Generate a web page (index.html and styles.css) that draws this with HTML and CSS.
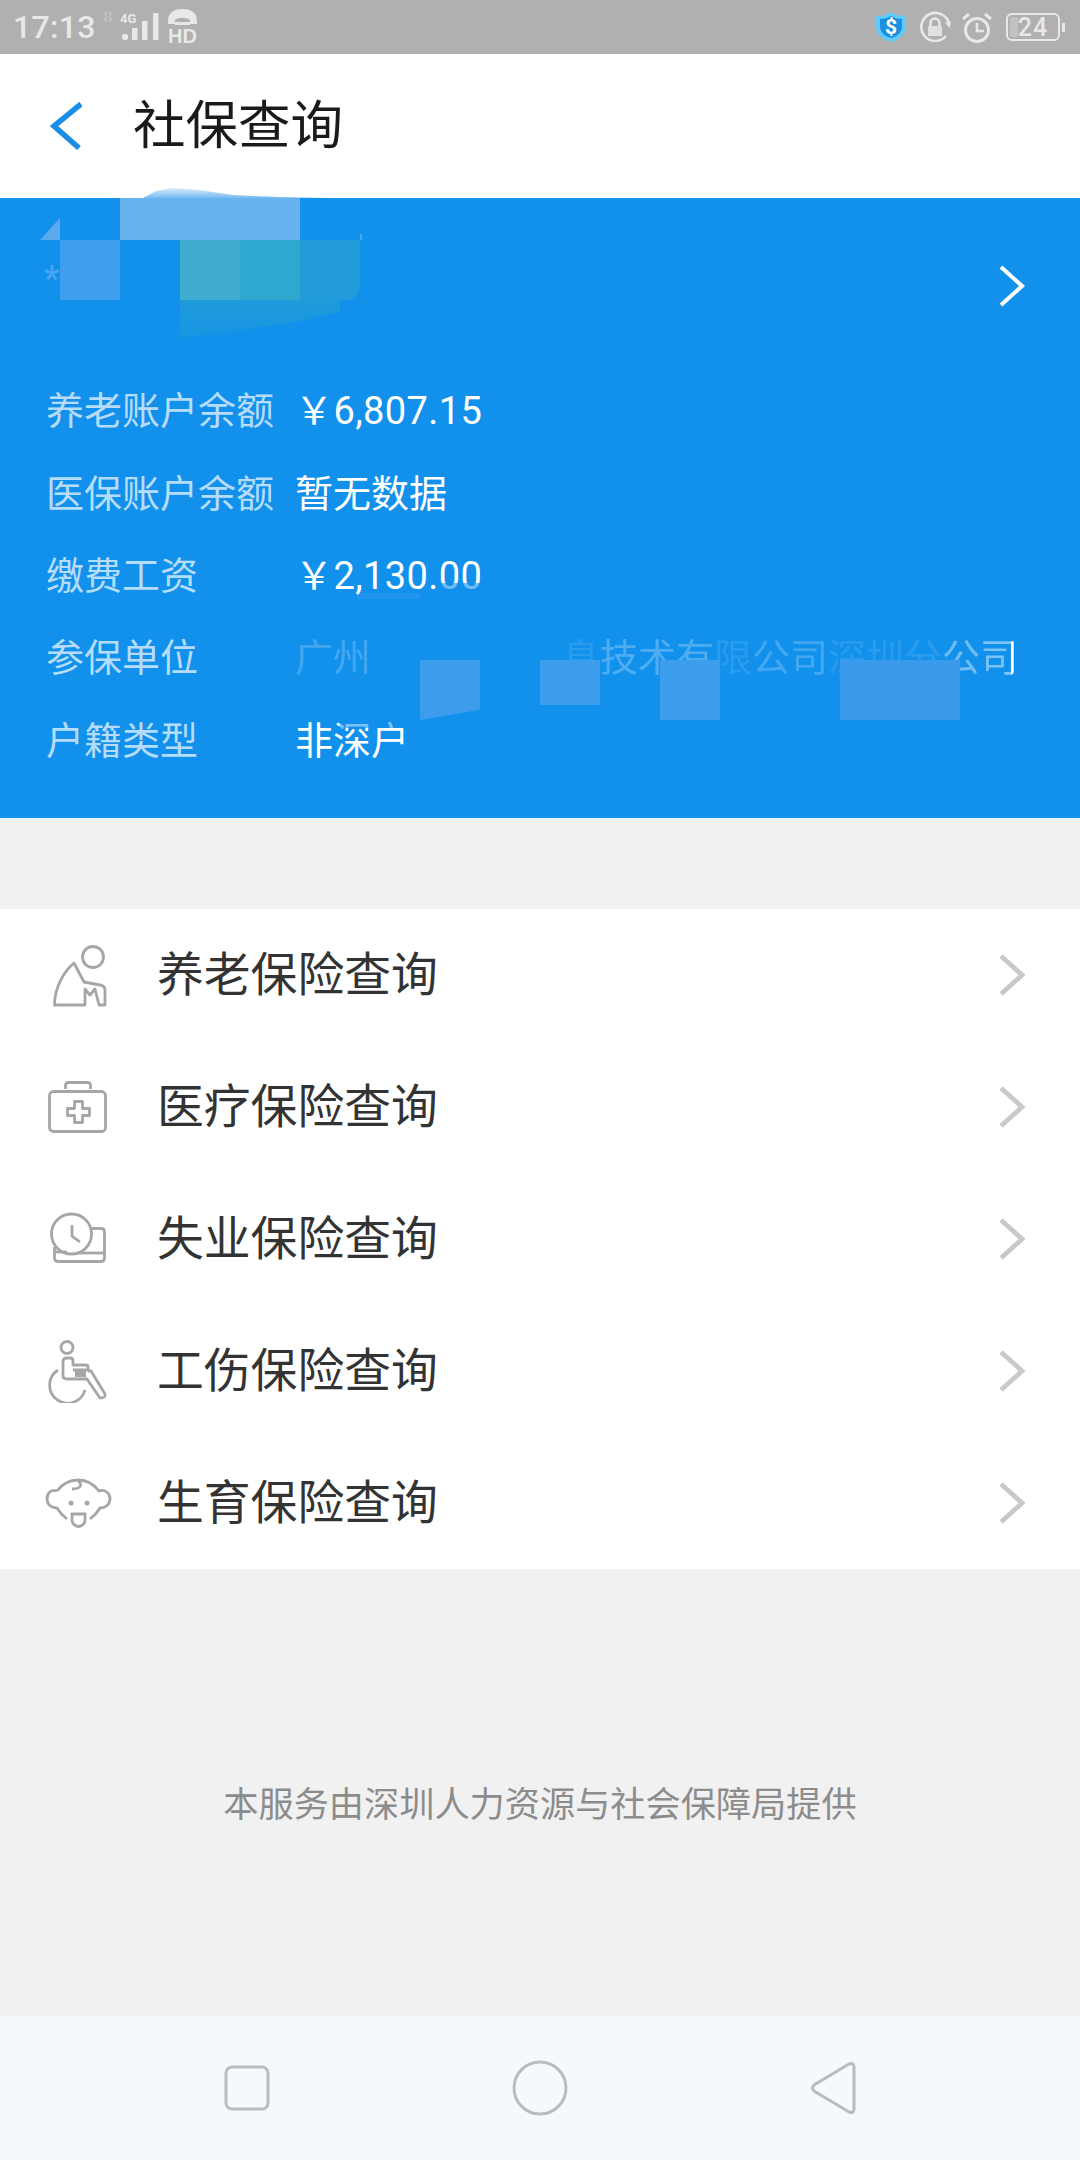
FILE: index.html
```html
<!DOCTYPE html>
<html lang="zh-CN">
<head>
<meta charset="utf-8">
<title>社保查询</title>
<link rel="stylesheet" href="styles.css">
</head>
<body>
<div class="phone">
  <div class="status">
    <div class="status-left">
      <span class="time">17:13</span>
      <svg class="sig" width="60" height="34" viewBox="0 0 60 34">
        <path d="M3 1v11M7 1v11M1 5l2-3M9 5L7 2M1 8l2 3M9 8l-2 3" stroke="#c6c6c6" stroke-width="1.200" fill="none"/>
        <text x="17" y="13" class="st-small">4G</text>
        <rect x="19" y="24" width="6" height="6" rx="2" fill="#e8e8e8"/>
        <rect x="29" y="18" width="5.500" height="12" fill="#e8e8e8"/>
        <rect x="39" y="11" width="5.500" height="19" fill="#e8e8e8"/>
        <rect x="50" y="3" width="5.500" height="27" fill="#e8e8e8"/>
      </svg>
      <svg class="hd" width="34" height="38" viewBox="0 0 34 38">
        <path d="M2 13C2 4 9 1 16.500 1S31 4 31 13v3h-7v-4c-4-3-11-3-15 0v4H2z" fill="#e8e8e8"/>
        <rect x="9" y="14" width="15" height="3" fill="#e8e8e8"/>
        <text x="2" y="35" class="st-hd">HD</text>
      </svg>
    </div>
    <div class="status-right">
      <svg class="s-shield" width="30" height="30" viewBox="0 0 30 30">
        <path d="M15 0c4 3 9 4 15 4v10c0 8-6 13-15 16C6 27 0 22 0 14V4c6 0 11-1 15-4z" fill="#5fcbfc"/>
        <path d="M15 4c3 2 7 3 11 3v7c0 6-4 10-11 12C8 24 4 20 4 14V7c4 0 8-1 11-3z" fill="#1e8edf"/>
        <text x="15" y="22" class="st-dollar">$</text>
      </svg>
      <svg class="s-lock" width="32" height="32" viewBox="0 0 32 32">
        <path d="M27 25A14 14 0 1 1 30 13" fill="none" stroke="#e8e8e8" stroke-width="2.600"/>
        <path d="M26 12l5 5 1-7z" fill="#e8e8e8"/>
        <rect x="9" y="15" width="14" height="10" fill="#e0e0e0"/>
        <path d="M11.500 15v-3a4.500 4.500 0 0 1 9 0v3" fill="none" stroke="#e8e8e8" stroke-width="2.500"/>
      </svg>
      <svg class="s-alarm" width="30" height="31" viewBox="0 0 30 31">
        <circle cx="15" cy="18" r="11.500" fill="none" stroke="#e8e8e8" stroke-width="3"/>
        <path d="M15 11v8h7" fill="none" stroke="#e8e8e8" stroke-width="2.600"/>
        <path d="M1 7l6-5M29 7l-6-5" fill="none" stroke="#e8e8e8" stroke-width="3"/>
      </svg>
      <div class="battery"><span class="batt-fill"></span><span class="batt-num">24</span><span class="batt-tip"></span></div>
    </div>
  </div>

  <header class="topbar">
    <svg class="back" width="34" height="48" viewBox="0 0 34 48"><path d="M33 2 6 24l25 22" fill="none" stroke="#1a8de6" stroke-width="5.500"/></svg>
    <h1 class="title">社保查询</h1>
  </header>

  <section class="card">
    <div class="mosaic m1"></div>
    <div class="mosaic m2"></div>
    <div class="mosaic m3"></div>
    <div class="mosaic m4"></div>
    <div class="mosaic m5"></div>
    <div class="mosaic m6"></div>
    <div class="mosaic m7"></div>
    <div class="mosaic m8"></div>
    <div class="mosaic m9"></div>
    <div class="mosaic veil"></div>
    <div class="mosaic b1"></div>
    <div class="mosaic b2"></div>
    <div class="mosaic b3"></div>
    <div class="mosaic b4"></div>
    <div class="mosaic b5"></div>
    <div class="mosaic b6"></div>
    <div class="mosaic b7"></div>

    <div class="card-head">
      <span class="star">*</span>
      <svg class="card-arrow" width="28" height="44" viewBox="0 0 28 44"><path d="M3 3l21 19L3 41" fill="none" stroke="#fff" stroke-width="4"/></svg>
    </div>
    <div class="info-list">
      <div class="info"><span class="k">养老账户余额</span><span class="v amount">￥6,807.15</span></div>
      <div class="info"><span class="k">医保账户余额</span><span class="v">暂无数据</span></div>
      <div class="info"><span class="k">缴费工资</span><span class="v amount">￥2,130.00</span></div>
      <div class="info"><span class="k">参保单位</span><span class="v"><span class="f25">广州</span><span class="gap"></span><span class="f15">息</span><span class="f30">技术有</span><span class="f15">限</span><span class="f25">公司</span><span class="f15">深圳分</span><span class="f45">公</span><span class="f-last">司</span></span></div>
      <div class="info"><span class="k">户籍类型</span><span class="v">非深户</span></div>
    </div>
  </section>

  <ul class="menu">
    <li class="row">
      <svg class="ico" width="62" height="64" viewBox="0 0 62 64">
        <g fill="none" stroke="#a6a6a6" stroke-width="2.800" stroke-linejoin="round">
          <circle cx="46" cy="14" r="10.500"/>
          <path d="M7.500 62C7.500 45 17 28 27 20L37 39 53 42Q58 43 58 47V62H52L48 46 43 52 38 46V62Z"/>
        </g>
      </svg>
      <span class="label">养老保险查询</span>
      <svg class="chev" width="28" height="44" viewBox="0 0 28 44"><path d="M3 3l21 19L3 41" fill="none" stroke="#c8c8c8" stroke-width="4.800"/></svg>
    </li>
    <li class="row">
      <svg class="ico" width="62" height="54" viewBox="0 0 62 54">
        <g fill="none" stroke="#a6a6a6" stroke-width="2.800">
          <rect x="2.500" y="11.500" width="56" height="40" rx="4"/>
          <path d="M18.500 9V5.500q0-3 3-3h19q3 0 3 3V9"/>
          <path d="M27.500 21.500h8v7h7v7h-7v7h-8v-7h-7v-7h7z" stroke-linejoin="round"/>
        </g>
      </svg>
      <span class="label">医疗保险查询</span>
      <svg class="chev" width="28" height="44" viewBox="0 0 28 44"><path d="M3 3l21 19L3 41" fill="none" stroke="#c8c8c8" stroke-width="4.800"/></svg>
    </li>
    <li class="row">
      <svg class="ico" width="62" height="54" viewBox="0 0 62 54">
        <g fill="none" stroke="#a6a6a6" stroke-width="2.800">
          <path d="M45 16.500H54q3.500 0 3.500 3.500v26q0 3.500-3.500 3.500H11q-3.500 0-3.500-3.500V35"/>
          <path d="M30 41H57"/>
          <path d="M8 40H20" />
          <circle cx="24.500" cy="22" r="20"/>
          <path d="M25 13v11l8 6"/>
        </g>
      </svg>
      <span class="label">失业保险查询</span>
      <svg class="chev" width="28" height="44" viewBox="0 0 28 44"><path d="M3 3l21 19L3 41" fill="none" stroke="#c8c8c8" stroke-width="4.800"/></svg>
    </li>
    <li class="row">
      <svg class="ico" width="62" height="64" viewBox="0 -1 62 64">
        <g fill="none" stroke="#a6a6a6" stroke-width="2.800" stroke-linejoin="round">
          <circle cx="20" cy="7.500" r="6"/>
          <path d="M16 36V22q0-4 4-4h3q3 0 3 3v4h13q2 0 2 2v3H26"/>
          <path d="M41 31h3L58 54q1 4-5 4L40 39H20q-4 0-4-3"/>
          <path d="M11 30A18 18 0 1 0 38 50"/>
        </g>
        <rect x="28" y="30" width="11" height="7" fill="#a6a6a6"/>
      </svg>
      <span class="label">工伤保险查询</span>
      <svg class="chev" width="28" height="44" viewBox="0 0 28 44"><path d="M3 3l21 19L3 41" fill="none" stroke="#c8c8c8" stroke-width="4.800"/></svg>
    </li>
    <li class="row">
      <svg class="ico wide" width="68" height="50" viewBox="0 0 68 50">
        <g fill="none" stroke="#a6a6a6" stroke-width="2.800">
          <path d="M12 13C18 5 25 2 33 2S48 5 54 13C60 11 65 15 65 21 65 27 60 30 55 30 52 35 49 38 45 41"/>
          <path d="M12 13C6 11 2 15 2 21 2 27 7 30 12 30 15 35 18 38 22 41"/>
          <path d="M33 3C38 6 36 11 27 11"/>
          <path d="M27 36h13v6a6.500 6.500 0 0 1-13 0z"/>
        </g>
        <circle cx="26" cy="25" r="2.500" fill="#a6a6a6"/>
        <circle cx="42" cy="25" r="2.500" fill="#a6a6a6"/>
      </svg>
      <span class="label">生育保险查询</span>
      <svg class="chev" width="28" height="44" viewBox="0 0 28 44"><path d="M3 3l21 19L3 41" fill="none" stroke="#c8c8c8" stroke-width="4.800"/></svg>
    </li>
  </ul>

  <main class="foot"><p>本服务由深圳人力资源与社会保障局提供</p></main>

  <nav class="navbar">
    <svg width="46" height="46" viewBox="0 0 46 46"><rect x="2" y="2" width="42" height="42" rx="6" fill="none" stroke="#b7bcc0" stroke-width="3"/></svg>
    <svg width="56" height="56" viewBox="0 0 56 56"><circle cx="28" cy="28" r="26" fill="none" stroke="#b7bcc0" stroke-width="3"/></svg>
    <svg width="46" height="54" viewBox="0 0 46 54"><path d="M39 3 4 24q-3 3 0 6l35 21q5 2 5-3V6q0-5-5-3z" fill="none" stroke="#b7bcc0" stroke-width="3"/></svg>
  </nav>
</div>
</body>
</html>
```
FILE: styles.css
```css
* { box-sizing: border-box; }
html, body { margin: 0; padding: 0; }
body { font-family: Roboto, "Noto Sans CJK SC", sans-serif; background: #f1f1f1; }
.phone { width: 1080px; height: 2160px; display: flex; flex-direction: column; overflow: hidden; }

.status { height: 54px; background: #b0b0b0; display: flex; justify-content: space-between; align-items: center; padding: 0 20px 0 13px; color: #e8e8e8; }
.status-left { display: flex; align-items: center; }
.time { font-size: 32px; font-weight: 500; letter-spacing: .3px; width: 90px; }
.sig { flex: none; }
.hd { flex: none; margin-left: 3px; margin-top: -1px; }
.st-small { font: bold 13px Roboto, sans-serif; fill: #e8e8e8; }
.st-hd { font: bold 20px "Liberation Sans", sans-serif; fill: #e8e8e8; }
.st-dollar { font: bold 21px Roboto, sans-serif; fill: #fff; text-anchor: middle; }
.status-right { display: flex; align-items: center; }
.s-shield { margin-right: 13px; }
.s-lock { margin-right: 11px; }
.s-alarm { margin-right: 14px; }
.battery { position: relative; width: 54px; height: 28px; border: 2px solid #e8e8e8; border-radius: 6px; display: flex; align-items: center; justify-content: center; }
.batt-fill { position: absolute; left: 2px; top: 2px; bottom: 2px; width: 8px; background: #c2c2c2; border-radius: 2px; }
.batt-num { position: relative; font-size: 25px; font-weight: 500; line-height: 1; letter-spacing: 1px; }
.batt-tip { position: absolute; right: -7px; top: 8px; width: 3px; height: 9px; background: #e8e8e8; }

.topbar { height: 144px; background: #fff; display: flex; align-items: center; padding-left: 48px; }
.back { flex: none; }
.title { margin: 0 0 0 51px; font-size: 52.500px; font-weight: 400; color: #1a1a1a; line-height: 1; }

.card { position: relative; height: 620px; background: #1190ec; display: flex; flex-direction: column; }
.card-head { height: 172px; display: flex; align-items: center; justify-content: space-between; padding: 0 54px 0 44px; position: relative; }
.star { color: #4ea5ef; font-size: 36px; margin-bottom: 10px; }
.card-arrow { flex: none; margin-top: 3px; }
.info-list { display: flex; flex-direction: column; padding: 0 46px; position: relative; }
.info { height: 82.400px; display: flex; align-items: center; font-size: 38px; line-height: 1; white-space: nowrap; }
.k { width: 249px; color: #b5dcfa; flex: none; }
.v { color: #fff; flex: none; }
.amount { letter-spacing: .4px; }
.f15 { opacity: .1; }
.f25 { opacity: .2; }
.f30 { opacity: .25; }
.f45 { opacity: .4; }
.f-last { background: linear-gradient(90deg, rgba(255,255,255,.45) 82%, #fff 82%); -webkit-background-clip: text; background-clip: text; color: transparent; }
.gap { display: inline-block; width: 191px; }

.mosaic { position: absolute; }
.m1 { left: 120px; top: 0; width: 180px; height: 42px; background: #67b3f0; }
.m2 { left: 60px; top: 42px; width: 60px; height: 60px; background: #3f9fee; }
.m3 { left: 180px; top: 42px; width: 60px; height: 60px; background: #3eabcf; }
.m4 { left: 240px; top: 42px; width: 60px; height: 60px; background: #2fa8d0; }
.m5 { left: 300px; top: 42px; width: 60px; height: 60px; background: #229cd8; border-radius: 0 0 14px 0; }
.m6 { left: 180px; top: 102px; width: 160px; height: 38px; background: linear-gradient(#1f9bdb, #1795e2); clip-path: polygon(0 0, 100% 0, 100% 30%, 70% 60%, 0 100%); }
.m7 { left: 143px; top: -10px; width: 183px; height: 10px; background: linear-gradient(#dbecfb, #78baf2); clip-path: polygon(0 100%, 7% 30%, 16% 0, 31% 20%, 49% 70%, 75% 90%, 100% 100%); }
.m8 { left: 40px; top: 20px; width: 20px; height: 22px; background: #5ba9ef; clip-path: polygon(100% 0, 100% 100%, 0 100%); }
.m9 { left: 360px; top: 36px; width: 2px; height: 6px; background: #4fa6ee; }
.veil { left: 300px; top: 410px; width: 720px; height: 112px; background: #1291ec; }
.b1 { left: 420px; top: 462px; width: 60px; height: 60px; background: #3d9ded; z-index: 1; clip-path: polygon(0 0, 100% 0, 100% 83%, 0 100%); }
.b2 { left: 540px; top: 462px; width: 60px; height: 45px; background: #3d9ded; z-index: 1; }
.b3 { left: 660px; top: 462px; width: 60px; height: 60px; background: #3d9ded; z-index: 1; }
.b4 { left: 840px; top: 462px; width: 120px; height: 60px; background: #3a9bed; z-index: 1; }
.b5 { left: 440px; top: 385px; width: 45px; height: 8px; background: rgba(17,144,236,.6); z-index: 1; }
.b6 { left: 357px; top: 395px; width: 63px; height: 6px; background: #2195ed; }
.b7 { left: 340px; top: 522px; width: 60px; height: 8px; background: rgba(17,144,236,.55); z-index: 1; }

.menu { list-style: none; margin: 91px 0 0; padding: 0; background: #fff; }
.row { height: 132px; display: flex; align-items: center; padding-left: 157px; position: relative; }
.ico { position: absolute; left: 47px; top: 50%; transform: translateY(-50%); }
.ico.wide { left: 45px; }
.label { font-size: 46.800px; color: #333; line-height: 1; flex: 1; }
.chev { margin-right: 54px; flex: none; }

.foot { flex: 1; display: flex; justify-content: center; }
.foot p { margin: 219px 0 0; font-size: 35.200px; line-height: 1; color: #8c8c8c; }

.navbar { height: 144px; background: #f5f9fc; display: flex; align-items: center; justify-content: space-between; padding: 0 224px; }
```
